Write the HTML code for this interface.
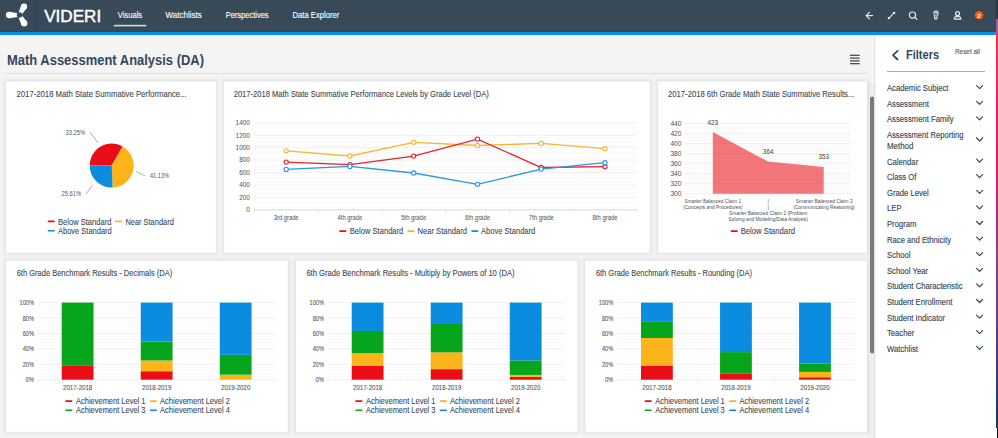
<!DOCTYPE html>
<html><head><meta charset="utf-8"><title>Videri - Math Assessment Analysis</title>
<style>
html,body{margin:0;padding:0;width:998px;height:438px;overflow:hidden;background:#f3f3f3}
svg{display:block;font-family:"Liberation Sans", sans-serif}
</style></head><body>
<svg width="998" height="438" viewBox="0 0 998 438">
<rect x="0" y="0" width="998" height="32" fill="#384a57"/>
<rect x="0" y="31" width="996" height="1" fill="#3e4448"/>
<rect x="0" y="32" width="996" height="3" fill="#0590ec"/>
<rect x="0" y="35" width="874" height="1" fill="#f8f5f3"/>
<rect x="35" y="0" width="1" height="31" fill="#2f3d47"/>
<path d="M19.52,13.50 L9.23,11.70 L9.17,18.30 L19.48,16.70 Z" fill="#fff"/>
<circle cx="9.2" cy="15.0" r="3.3" fill="#fff"/>
<path d="M20.92,15.84 L26.75,7.94 L21.25,5.06 L18.08,14.36 Z" fill="#fff"/>
<circle cx="24.0" cy="6.5" r="3.1" fill="#fff"/>
<path d="M18.11,15.90 L21.42,24.89 L26.98,21.71 L20.89,14.30 Z" fill="#fff"/>
<circle cx="24.2" cy="23.3" r="3.2" fill="#fff"/>
<circle cx="19.5" cy="15.1" r="2.75" fill="#384a57"/>
<text x="44.2" y="21.8" font-size="16.5" fill="#fff" font-weight="400" text-anchor="start" textLength="57" lengthAdjust="spacingAndGlyphs" stroke="#fff" stroke-width="0.45">VIDERI</text>
<text x="117.7" y="18.2" font-size="8.2" fill="#fff" font-weight="400" text-anchor="start" textLength="24.5" lengthAdjust="spacingAndGlyphs" stroke="#fff" stroke-width="0.12">Visuals</text>
<text x="165.6" y="18.2" font-size="8.2" fill="#fff" font-weight="400" text-anchor="start" textLength="36.1" lengthAdjust="spacingAndGlyphs" stroke="#fff" stroke-width="0.12">Watchlists</text>
<text x="225.7" y="18.2" font-size="8.2" fill="#fff" font-weight="400" text-anchor="start" textLength="42.9" lengthAdjust="spacingAndGlyphs" stroke="#fff" stroke-width="0.12">Perspectives</text>
<text x="292.5" y="18.2" font-size="8.2" fill="#fff" font-weight="400" text-anchor="start" textLength="46.8" lengthAdjust="spacingAndGlyphs" stroke="#fff" stroke-width="0.12">Data Explorer</text>
<rect x="113.8" y="24.8" width="32.4" height="1.6" fill="#d5dade"/>
<path d="M872.6,15.6 H866.2 M869.4,12.3 L866.1,15.6 L869.4,18.9" fill="none" stroke="#e8ecef" stroke-width="1.2" stroke-linecap="round" stroke-linejoin="round"/>
<path d="M889.2,17.8 L893.8,13.2" fill="none" stroke="#e8ecef" stroke-width="1.2" stroke-linecap="round" stroke-linejoin="round"/><circle cx="888.9" cy="18.1" r="1.2" fill="#e8ecef"/><circle cx="894.1" cy="12.9" r="1.2" fill="#e8ecef"/>
<circle cx="912.5" cy="15.1" r="3.1" fill="none" stroke="#e8ecef" stroke-width="1.2" stroke-linecap="round" stroke-linejoin="round"/><path d="M914.8,17.4 L916.8,19.3" fill="none" stroke="#e8ecef" stroke-width="1.2" stroke-linecap="round" stroke-linejoin="round"/>
<path d="M933.6,13.6 A2.3,2.3 0 1 1 937.9,14.5 L937,16.1 V18.6 Q935.8,19.9 934.6,18.6 V16.1 L933.9,14.6" fill="none" stroke="#e8ecef" stroke-width="1.1" stroke-linejoin="round"/>
<path d="M934.8,13.3 Q935.1,12.2 936,12.3 Q937,12.5 936.6,13.5 Q936.3,14.1 935.8,14.5 V15.2" fill="none" stroke="#e8ecef" stroke-width="0.9" stroke-linecap="round"/>
<circle cx="935.8" cy="17.3" r="0.6" fill="#e8ecef"/>
<circle cx="957.5" cy="13.6" r="2.0" fill="none" stroke="#e8ecef" stroke-width="1.2"/>
<path d="M954.3,19.2 Q953.9,16.4 957.5,16.4 Q961.1,16.4 960.7,19.2 Z" fill="none" stroke="#e8ecef" stroke-width="1.2" stroke-linejoin="round"/>
<circle cx="979.1" cy="15.3" r="5" fill="#2f3c45"/><circle cx="979.1" cy="15.3" r="4.3" fill="#fd5a17"/>
<text x="979.1" y="17.5" font-size="6.2" fill="#fff" font-weight="700" text-anchor="middle">2</text>
<defs><linearGradient id="edge" x1="0" y1="0" x2="0" y2="1"><stop offset="0" stop-color="#f23c52"/><stop offset="0.215" stop-color="#f2185a"/><stop offset="0.416" stop-color="#d01a78"/><stop offset="0.59" stop-color="#8c3c90"/><stop offset="0.79" stop-color="#5a3890"/><stop offset="0.93" stop-color="#203a78"/><stop offset="1" stop-color="#1a3068"/></linearGradient></defs>
<rect x="996" y="0" width="2" height="19" fill="#2a3640"/>
<rect x="996" y="19" width="2" height="10" fill="#9a5aa2"/>
<rect x="996" y="29" width="2" height="399" fill="url(#edge)"/>
<rect x="996" y="428" width="2" height="10" fill="#ffffff"/>
<rect x="997" y="428" width="1" height="10" fill="#111111"/>
<rect x="0" y="36" width="874" height="402" fill="#f4f4f4"/>
<text x="7" y="64.7" font-size="14.5" fill="#34485a" font-weight="700" text-anchor="start" textLength="197" lengthAdjust="spacingAndGlyphs">Math Assessment Analysis (DA)</text>
<rect x="850" y="54.699999999999996" width="9.6" height="1.2" fill="#3a4046"/>
<rect x="850" y="57.5" width="9.6" height="1.2" fill="#3a4046"/>
<rect x="850" y="60.3" width="9.6" height="1.2" fill="#3a4046"/>
<rect x="850" y="63.1" width="9.6" height="1.2" fill="#3a4046"/>
<rect x="6" y="73" width="862" height="1" fill="#dedee2"/>
<rect x="867" y="82" width="7" height="356" fill="#efefef"/>
<rect x="870" y="96.5" width="4.4" height="257" rx="2.2" fill="#7a7a7a"/>
<rect x="874" y="35" width="1.5" height="403" fill="#e4e4e6"/>
<rect x="875.5" y="35" width="120.5" height="403" fill="#ffffff"/>
<path d="M897.6,50.9 L893,55.2 L897.6,59.5" fill="none" stroke="#34485a" stroke-width="1.8" stroke-linecap="round" stroke-linejoin="round"/>
<text x="906" y="58.6" font-size="12.3" fill="#34485a" font-weight="700" text-anchor="start" textLength="33.1" lengthAdjust="spacingAndGlyphs">Filters</text>
<text x="954.9" y="53.8" font-size="7" fill="#4a5561" font-weight="400" text-anchor="start" textLength="25.1" lengthAdjust="spacingAndGlyphs" stroke="#4a5561" stroke-width="0.1">Reset all</text>
<rect x="887" y="71" width="98" height="1" fill="#a7aeb4"/>
<text x="887" y="91.2" font-size="8.3" fill="#394959" font-weight="400" text-anchor="start" textLength="61.5" lengthAdjust="spacingAndGlyphs" stroke="#394959" stroke-width="0.15">Academic Subject</text>
<path d="M976.6,85.7 L979.6,88.7 L982.6,85.7" fill="none" stroke="#394959" stroke-width="1.2" stroke-linecap="round" stroke-linejoin="round"/>
<text x="887" y="106.8" font-size="8.3" fill="#394959" font-weight="400" text-anchor="start" textLength="41.8" lengthAdjust="spacingAndGlyphs" stroke="#394959" stroke-width="0.15">Assessment</text>
<path d="M976.6,101.3 L979.6,104.3 L982.6,101.3" fill="none" stroke="#394959" stroke-width="1.2" stroke-linecap="round" stroke-linejoin="round"/>
<text x="887" y="122.4" font-size="8.3" fill="#394959" font-weight="400" text-anchor="start" textLength="66.6" lengthAdjust="spacingAndGlyphs" stroke="#394959" stroke-width="0.15">Assessment Family</text>
<path d="M976.6,116.9 L979.6,119.9 L982.6,116.9" fill="none" stroke="#394959" stroke-width="1.2" stroke-linecap="round" stroke-linejoin="round"/>
<text x="887" y="138.0" font-size="8.3" fill="#394959" font-weight="400" text-anchor="start" textLength="76.5" lengthAdjust="spacingAndGlyphs" stroke="#394959" stroke-width="0.15">Assessment Reporting</text>
<text x="887" y="149.1" font-size="8.3" fill="#394959" font-weight="400" text-anchor="start" textLength="26.4" lengthAdjust="spacingAndGlyphs" stroke="#394959" stroke-width="0.15">Method</text>
<path d="M976.6,138.0 L979.6,141.0 L982.6,138.0" fill="none" stroke="#394959" stroke-width="1.2" stroke-linecap="round" stroke-linejoin="round"/>
<text x="887" y="164.6" font-size="8.3" fill="#394959" font-weight="400" text-anchor="start" textLength="31.2" lengthAdjust="spacingAndGlyphs" stroke="#394959" stroke-width="0.15">Calendar</text>
<path d="M976.6,159.1 L979.6,162.1 L982.6,159.1" fill="none" stroke="#394959" stroke-width="1.2" stroke-linecap="round" stroke-linejoin="round"/>
<text x="887" y="180.2" font-size="8.3" fill="#394959" font-weight="400" text-anchor="start" textLength="29.4" lengthAdjust="spacingAndGlyphs" stroke="#394959" stroke-width="0.15">Class Of</text>
<path d="M976.6,174.7 L979.6,177.7 L982.6,174.7" fill="none" stroke="#394959" stroke-width="1.2" stroke-linecap="round" stroke-linejoin="round"/>
<text x="887" y="195.8" font-size="8.3" fill="#394959" font-weight="400" text-anchor="start" textLength="41.8" lengthAdjust="spacingAndGlyphs" stroke="#394959" stroke-width="0.15">Grade Level</text>
<path d="M976.6,190.3 L979.6,193.3 L982.6,190.3" fill="none" stroke="#394959" stroke-width="1.2" stroke-linecap="round" stroke-linejoin="round"/>
<text x="887" y="211.4" font-size="8.3" fill="#394959" font-weight="400" text-anchor="start" textLength="14.5" lengthAdjust="spacingAndGlyphs" stroke="#394959" stroke-width="0.15">LEP</text>
<path d="M976.6,205.9 L979.6,208.9 L982.6,205.9" fill="none" stroke="#394959" stroke-width="1.2" stroke-linecap="round" stroke-linejoin="round"/>
<text x="887" y="227.0" font-size="8.3" fill="#394959" font-weight="400" text-anchor="start" textLength="29.4" lengthAdjust="spacingAndGlyphs" stroke="#394959" stroke-width="0.15">Program</text>
<path d="M976.6,221.5 L979.6,224.5 L982.6,221.5" fill="none" stroke="#394959" stroke-width="1.2" stroke-linecap="round" stroke-linejoin="round"/>
<text x="887" y="242.60000000000002" font-size="8.3" fill="#394959" font-weight="400" text-anchor="start" textLength="64.0" lengthAdjust="spacingAndGlyphs" stroke="#394959" stroke-width="0.15">Race and Ethnicity</text>
<path d="M976.6,237.1 L979.6,240.1 L982.6,237.1" fill="none" stroke="#394959" stroke-width="1.2" stroke-linecap="round" stroke-linejoin="round"/>
<text x="887" y="258.2" font-size="8.3" fill="#394959" font-weight="400" text-anchor="start" textLength="23.5" lengthAdjust="spacingAndGlyphs" stroke="#394959" stroke-width="0.15">School</text>
<path d="M976.6,252.7 L979.6,255.7 L982.6,252.7" fill="none" stroke="#394959" stroke-width="1.2" stroke-linecap="round" stroke-linejoin="round"/>
<text x="887" y="273.8" font-size="8.3" fill="#394959" font-weight="400" text-anchor="start" textLength="41.0" lengthAdjust="spacingAndGlyphs" stroke="#394959" stroke-width="0.15">School Year</text>
<path d="M976.6,268.3 L979.6,271.3 L982.6,268.3" fill="none" stroke="#394959" stroke-width="1.2" stroke-linecap="round" stroke-linejoin="round"/>
<text x="887" y="289.4" font-size="8.3" fill="#394959" font-weight="400" text-anchor="start" textLength="75.6" lengthAdjust="spacingAndGlyphs" stroke="#394959" stroke-width="0.15">Student Characteristic</text>
<path d="M976.6,283.9 L979.6,286.9 L982.6,283.9" fill="none" stroke="#394959" stroke-width="1.2" stroke-linecap="round" stroke-linejoin="round"/>
<text x="887" y="305.0" font-size="8.3" fill="#394959" font-weight="400" text-anchor="start" textLength="65.3" lengthAdjust="spacingAndGlyphs" stroke="#394959" stroke-width="0.15">Student Enrollment</text>
<path d="M976.6,299.5 L979.6,302.5 L982.6,299.5" fill="none" stroke="#394959" stroke-width="1.2" stroke-linecap="round" stroke-linejoin="round"/>
<text x="887" y="320.6" font-size="8.3" fill="#394959" font-weight="400" text-anchor="start" textLength="58.1" lengthAdjust="spacingAndGlyphs" stroke="#394959" stroke-width="0.15">Student Indicator</text>
<path d="M976.6,315.1 L979.6,318.1 L982.6,315.1" fill="none" stroke="#394959" stroke-width="1.2" stroke-linecap="round" stroke-linejoin="round"/>
<text x="887" y="336.2" font-size="8.3" fill="#394959" font-weight="400" text-anchor="start" textLength="27.3" lengthAdjust="spacingAndGlyphs" stroke="#394959" stroke-width="0.15">Teacher</text>
<path d="M976.6,330.7 L979.6,333.7 L982.6,330.7" fill="none" stroke="#394959" stroke-width="1.2" stroke-linecap="round" stroke-linejoin="round"/>
<text x="887" y="351.8" font-size="8.3" fill="#394959" font-weight="400" text-anchor="start" textLength="30.9" lengthAdjust="spacingAndGlyphs" stroke="#394959" stroke-width="0.15">Watchlist</text>
<path d="M976.6,346.3 L979.6,349.3 L982.6,346.3" fill="none" stroke="#394959" stroke-width="1.2" stroke-linecap="round" stroke-linejoin="round"/>
<rect x="2" y="77.6" width="217.8" height="179.2" rx="4" fill="rgba(30,30,70,0.01)"/>
<rect x="3" y="78.6" width="215.8" height="177.2" rx="3" fill="rgba(30,30,70,0.01)"/>
<rect x="4" y="79.6" width="213.8" height="175.2" rx="2" fill="rgba(30,30,70,0.013)"/>
<rect x="5" y="80.6" width="211.8" height="173.2" rx="1" fill="rgba(30,30,70,0.02)"/>
<rect x="6" y="81.6" width="209.8" height="171.2" fill="#ffffff"/>
<rect x="220.2" y="77.6" width="433.7" height="179.2" rx="4" fill="rgba(30,30,70,0.01)"/>
<rect x="221.2" y="78.6" width="431.7" height="177.2" rx="3" fill="rgba(30,30,70,0.01)"/>
<rect x="222.2" y="79.6" width="429.7" height="175.2" rx="2" fill="rgba(30,30,70,0.013)"/>
<rect x="223.2" y="80.6" width="427.7" height="173.2" rx="1" fill="rgba(30,30,70,0.02)"/>
<rect x="224.2" y="81.6" width="425.7" height="171.2" fill="#ffffff"/>
<rect x="654.2" y="77.6" width="216.8" height="179.2" rx="4" fill="rgba(30,30,70,0.01)"/>
<rect x="655.2" y="78.6" width="214.8" height="177.2" rx="3" fill="rgba(30,30,70,0.01)"/>
<rect x="656.2" y="79.6" width="212.8" height="175.2" rx="2" fill="rgba(30,30,70,0.013)"/>
<rect x="657.2" y="80.6" width="210.8" height="173.2" rx="1" fill="rgba(30,30,70,0.02)"/>
<rect x="658.2" y="81.6" width="208.8" height="171.2" fill="#ffffff"/>
<rect x="2" y="256.6" width="289.7" height="179.2" rx="4" fill="rgba(30,30,70,0.01)"/>
<rect x="3" y="257.6" width="287.7" height="177.2" rx="3" fill="rgba(30,30,70,0.01)"/>
<rect x="4" y="258.6" width="285.7" height="175.2" rx="2" fill="rgba(30,30,70,0.013)"/>
<rect x="5" y="259.6" width="283.7" height="173.2" rx="1" fill="rgba(30,30,70,0.02)"/>
<rect x="6" y="260.6" width="281.7" height="171.2" fill="#ffffff"/>
<rect x="292" y="256.6" width="289.4" height="179.2" rx="4" fill="rgba(30,30,70,0.01)"/>
<rect x="293" y="257.6" width="287.4" height="177.2" rx="3" fill="rgba(30,30,70,0.01)"/>
<rect x="294" y="258.6" width="285.4" height="175.2" rx="2" fill="rgba(30,30,70,0.013)"/>
<rect x="295" y="259.6" width="283.4" height="173.2" rx="1" fill="rgba(30,30,70,0.02)"/>
<rect x="296" y="260.6" width="281.4" height="171.2" fill="#ffffff"/>
<rect x="581.3" y="256.6" width="289.7" height="179.2" rx="4" fill="rgba(30,30,70,0.01)"/>
<rect x="582.3" y="257.6" width="287.7" height="177.2" rx="3" fill="rgba(30,30,70,0.01)"/>
<rect x="583.3" y="258.6" width="285.7" height="175.2" rx="2" fill="rgba(30,30,70,0.013)"/>
<rect x="584.3" y="259.6" width="283.7" height="173.2" rx="1" fill="rgba(30,30,70,0.02)"/>
<rect x="585.3" y="260.6" width="281.7" height="171.2" fill="#ffffff"/>
<text x="16.5" y="97.2" font-size="8.8" fill="#3b4957" font-weight="400" text-anchor="start" textLength="170.1" lengthAdjust="spacingAndGlyphs" stroke="#3b4957" stroke-width="0.1">2017-2018 Math State Summative Performance...</text>
<text x="233.7" y="97.2" font-size="8.8" fill="#3b4957" font-weight="400" text-anchor="start" textLength="255.2" lengthAdjust="spacingAndGlyphs" stroke="#3b4957" stroke-width="0.1">2017-2018 Math State Summative Performance Levels by Grade Level (DA)</text>
<text x="668.1" y="97.2" font-size="8.8" fill="#3b4957" font-weight="400" text-anchor="start" textLength="186.1" lengthAdjust="spacingAndGlyphs" stroke="#3b4957" stroke-width="0.1">2017-2018 6th Grade Math State Summative Results...</text>
<text x="16.7" y="276.2" font-size="8.8" fill="#3b4957" font-weight="400" text-anchor="start" textLength="155.5" lengthAdjust="spacingAndGlyphs" stroke="#3b4957" stroke-width="0.1">6th Grade Benchmark Results - Decimals (DA)</text>
<text x="306.4" y="276.2" font-size="8.8" fill="#3b4957" font-weight="400" text-anchor="start" textLength="208.1" lengthAdjust="spacingAndGlyphs" stroke="#3b4957" stroke-width="0.1">6th Grade Benchmark Results - Multiply by Powers of 10 (DA)</text>
<text x="595.9" y="276.2" font-size="8.8" fill="#3b4957" font-weight="400" text-anchor="start" textLength="156" lengthAdjust="spacingAndGlyphs" stroke="#3b4957" stroke-width="0.1">6th Grade Benchmark Results - Rounding (DA)</text>
<path d="M111.7,165.6 L89.70,165.60 A22,22 0 0 1 122.60,146.49 Z" fill="#ea0d17"/>
<path d="M111.7,165.6 L122.60,146.49 A22,22 0 0 1 112.56,187.58 Z" fill="#fbb51b"/>
<path d="M111.7,165.6 L112.56,187.58 A22,22 0 0 1 89.70,165.61 Z" fill="#0a8ce0"/>
<path d="M89.8,132 L98.1,142.9 M136.3,171.4 L145,175.9 M93,184.6 L85.9,194.3" stroke="#9a9a9a" stroke-width="0.8" fill="none"/>
<text x="65.5" y="134.8" font-size="6.4" fill="#4f5861" font-weight="400" text-anchor="start" textLength="19.6" lengthAdjust="spacingAndGlyphs">33.25%</text>
<text x="150" y="178.1" font-size="6.4" fill="#4f5861" font-weight="400" text-anchor="start" textLength="19.0" lengthAdjust="spacingAndGlyphs">41.13%</text>
<text x="61.6" y="196.3" font-size="6.4" fill="#4f5861" font-weight="400" text-anchor="start" textLength="19.4" lengthAdjust="spacingAndGlyphs">25.61%</text>
<rect x="47.6" y="220.6" width="7.3" height="1.7" rx="0.8" fill="#ea0d17"/>
<text x="58" y="224.8" font-size="8.5" fill="#3e4b59" font-weight="400" text-anchor="start" textLength="53.4" lengthAdjust="spacingAndGlyphs" stroke="#3e4b59" stroke-width="0.1">Below Standard</text>
<rect x="114.9" y="220.6" width="7.3" height="1.7" rx="0.8" fill="#fbb51b"/>
<text x="125.4" y="224.8" font-size="8.5" fill="#3e4b59" font-weight="400" text-anchor="start" textLength="48.4" lengthAdjust="spacingAndGlyphs" stroke="#3e4b59" stroke-width="0.1">Near Standard</text>
<rect x="47.6" y="229.89999999999998" width="7.3" height="1.7" rx="0.8" fill="#0a8ce0"/>
<text x="58" y="234.1" font-size="8.5" fill="#3e4b59" font-weight="400" text-anchor="start" textLength="53.8" lengthAdjust="spacingAndGlyphs" stroke="#3e4b59" stroke-width="0.1">Above Standard</text>
<rect x="254.3" y="209.3" width="382.59999999999997" height="1" fill="#efefef"/>
<rect x="254.3" y="206.81" width="382.59999999999997" height="0.8" fill="#f9f9f9"/>
<rect x="254.3" y="204.33" width="382.59999999999997" height="0.8" fill="#f9f9f9"/>
<rect x="254.3" y="201.84" width="382.59999999999997" height="0.8" fill="#f9f9f9"/>
<rect x="254.3" y="199.36" width="382.59999999999997" height="0.8" fill="#f9f9f9"/>
<rect x="254.3" y="196.87" width="382.59999999999997" height="1" fill="#efefef"/>
<rect x="254.3" y="194.39" width="382.59999999999997" height="0.8" fill="#f9f9f9"/>
<rect x="254.3" y="191.9" width="382.59999999999997" height="0.8" fill="#f9f9f9"/>
<rect x="254.3" y="189.41" width="382.59999999999997" height="0.8" fill="#f9f9f9"/>
<rect x="254.3" y="186.93" width="382.59999999999997" height="0.8" fill="#f9f9f9"/>
<rect x="254.3" y="184.44" width="382.59999999999997" height="1" fill="#efefef"/>
<rect x="254.3" y="181.96" width="382.59999999999997" height="0.8" fill="#f9f9f9"/>
<rect x="254.3" y="179.47" width="382.59999999999997" height="0.8" fill="#f9f9f9"/>
<rect x="254.3" y="176.99" width="382.59999999999997" height="0.8" fill="#f9f9f9"/>
<rect x="254.3" y="174.5" width="382.59999999999997" height="0.8" fill="#f9f9f9"/>
<rect x="254.3" y="172.01" width="382.59999999999997" height="1" fill="#efefef"/>
<rect x="254.3" y="169.53" width="382.59999999999997" height="0.8" fill="#f9f9f9"/>
<rect x="254.3" y="167.04" width="382.59999999999997" height="0.8" fill="#f9f9f9"/>
<rect x="254.3" y="164.56" width="382.59999999999997" height="0.8" fill="#f9f9f9"/>
<rect x="254.3" y="162.07" width="382.59999999999997" height="0.8" fill="#f9f9f9"/>
<rect x="254.3" y="159.59" width="382.59999999999997" height="1" fill="#efefef"/>
<rect x="254.3" y="157.1" width="382.59999999999997" height="0.8" fill="#f9f9f9"/>
<rect x="254.3" y="154.61" width="382.59999999999997" height="0.8" fill="#f9f9f9"/>
<rect x="254.3" y="152.13" width="382.59999999999997" height="0.8" fill="#f9f9f9"/>
<rect x="254.3" y="149.64" width="382.59999999999997" height="0.8" fill="#f9f9f9"/>
<rect x="254.3" y="147.16" width="382.59999999999997" height="1" fill="#efefef"/>
<rect x="254.3" y="144.67" width="382.59999999999997" height="0.8" fill="#f9f9f9"/>
<rect x="254.3" y="142.19" width="382.59999999999997" height="0.8" fill="#f9f9f9"/>
<rect x="254.3" y="139.7" width="382.59999999999997" height="0.8" fill="#f9f9f9"/>
<rect x="254.3" y="137.21" width="382.59999999999997" height="0.8" fill="#f9f9f9"/>
<rect x="254.3" y="134.73" width="382.59999999999997" height="1" fill="#efefef"/>
<rect x="254.3" y="132.24" width="382.59999999999997" height="0.8" fill="#f9f9f9"/>
<rect x="254.3" y="129.76" width="382.59999999999997" height="0.8" fill="#f9f9f9"/>
<rect x="254.3" y="127.27" width="382.59999999999997" height="0.8" fill="#f9f9f9"/>
<rect x="254.3" y="124.79" width="382.59999999999997" height="0.8" fill="#f9f9f9"/>
<rect x="254.3" y="122.3" width="382.59999999999997" height="1" fill="#efefef"/>
<text x="249.8" y="212.10000000000002" font-size="6.4" fill="#515a63" font-weight="400" text-anchor="end" stroke="#515a63" stroke-width="0.05">0</text>
<text x="249.8" y="199.6714285714286" font-size="6.4" fill="#515a63" font-weight="400" text-anchor="end" stroke="#515a63" stroke-width="0.05">200</text>
<text x="249.8" y="187.24285714285716" font-size="6.4" fill="#515a63" font-weight="400" text-anchor="end" stroke="#515a63" stroke-width="0.05">400</text>
<text x="249.8" y="174.81428571428575" font-size="6.4" fill="#515a63" font-weight="400" text-anchor="end" stroke="#515a63" stroke-width="0.05">600</text>
<text x="249.8" y="162.3857142857143" font-size="6.4" fill="#515a63" font-weight="400" text-anchor="end" stroke="#515a63" stroke-width="0.05">800</text>
<text x="249.8" y="149.95714285714288" font-size="6.4" fill="#515a63" font-weight="400" text-anchor="end" stroke="#515a63" stroke-width="0.05">1000</text>
<text x="249.8" y="137.52857142857147" font-size="6.4" fill="#515a63" font-weight="400" text-anchor="end" stroke="#515a63" stroke-width="0.05">1200</text>
<text x="249.8" y="125.10000000000001" font-size="6.4" fill="#515a63" font-weight="400" text-anchor="end" stroke="#515a63" stroke-width="0.05">1400</text>
<rect x="254.3" y="209.3" width="382.59999999999997" height="1" fill="#dedede"/>
<rect x="253.8" y="210" width="1" height="2.5" fill="#dedede"/>
<rect x="317.56666666666666" y="210" width="1" height="2.5" fill="#dedede"/>
<rect x="381.3333333333333" y="210" width="1" height="2.5" fill="#dedede"/>
<rect x="445.1" y="210" width="1" height="2.5" fill="#dedede"/>
<rect x="508.8666666666667" y="210" width="1" height="2.5" fill="#dedede"/>
<rect x="572.6333333333333" y="210" width="1" height="2.5" fill="#dedede"/>
<rect x="636.4" y="210" width="1" height="2.5" fill="#dedede"/>
<text x="286.18333333333334" y="219.8" font-size="6.3" fill="#515a63" font-weight="400" text-anchor="middle" textLength="24.9" lengthAdjust="spacingAndGlyphs" stroke="#515a63" stroke-width="0.05">3rd grade</text>
<text x="349.95" y="219.8" font-size="6.3" fill="#515a63" font-weight="400" text-anchor="middle" textLength="24.9" lengthAdjust="spacingAndGlyphs" stroke="#515a63" stroke-width="0.05">4th grade</text>
<text x="413.7166666666667" y="219.8" font-size="6.3" fill="#515a63" font-weight="400" text-anchor="middle" textLength="24.9" lengthAdjust="spacingAndGlyphs" stroke="#515a63" stroke-width="0.05">5th grade</text>
<text x="477.48333333333335" y="219.8" font-size="6.3" fill="#515a63" font-weight="400" text-anchor="middle" textLength="24.9" lengthAdjust="spacingAndGlyphs" stroke="#515a63" stroke-width="0.05">6th grade</text>
<text x="541.25" y="219.8" font-size="6.3" fill="#515a63" font-weight="400" text-anchor="middle" textLength="24.9" lengthAdjust="spacingAndGlyphs" stroke="#515a63" stroke-width="0.05">7th grade</text>
<text x="605.0166666666667" y="219.8" font-size="6.3" fill="#515a63" font-weight="400" text-anchor="middle" textLength="24.9" lengthAdjust="spacingAndGlyphs" stroke="#515a63" stroke-width="0.05">8th grade</text>
<path d="M286.2,150.8 L349.9,156.0 L413.7,142.3 L477.5,145.5 L541.2,143.4 L605.0,148.7" fill="none" stroke="#f9b62e" stroke-width="1.3"/>
<path d="M286.2,162.1 L349.9,164.6 L413.7,156.1 L477.5,139.1 L541.2,167.5 L605.0,166.7" fill="none" stroke="#e8202e" stroke-width="1.3"/>
<path d="M286.2,169.4 L349.9,166.4 L413.7,173.0 L477.5,184.3 L541.2,169.1 L605.0,162.7" fill="none" stroke="#2a98e4" stroke-width="1.3"/>
<circle cx="286.2" cy="150.8" r="2.1" fill="#fff" stroke="#f9b62e" stroke-width="1.1"/>
<circle cx="349.9" cy="156.0" r="2.1" fill="#fff" stroke="#f9b62e" stroke-width="1.1"/>
<circle cx="413.7" cy="142.3" r="2.1" fill="#fff" stroke="#f9b62e" stroke-width="1.1"/>
<circle cx="477.5" cy="145.5" r="2.1" fill="#fff" stroke="#f9b62e" stroke-width="1.1"/>
<circle cx="541.2" cy="143.4" r="2.1" fill="#fff" stroke="#f9b62e" stroke-width="1.1"/>
<circle cx="605.0" cy="148.7" r="2.1" fill="#fff" stroke="#f9b62e" stroke-width="1.1"/>
<circle cx="286.2" cy="162.1" r="2.1" fill="#fff" stroke="#e8202e" stroke-width="1.1"/>
<circle cx="349.9" cy="164.6" r="2.1" fill="#fff" stroke="#e8202e" stroke-width="1.1"/>
<circle cx="413.7" cy="156.1" r="2.1" fill="#fff" stroke="#e8202e" stroke-width="1.1"/>
<circle cx="477.5" cy="139.1" r="2.1" fill="#fff" stroke="#e8202e" stroke-width="1.1"/>
<circle cx="541.2" cy="167.5" r="2.1" fill="#fff" stroke="#e8202e" stroke-width="1.1"/>
<circle cx="605.0" cy="166.7" r="2.1" fill="#fff" stroke="#e8202e" stroke-width="1.1"/>
<circle cx="286.2" cy="169.4" r="2.1" fill="#fff" stroke="#2a98e4" stroke-width="1.1"/>
<circle cx="349.9" cy="166.4" r="2.1" fill="#fff" stroke="#2a98e4" stroke-width="1.1"/>
<circle cx="413.7" cy="173.0" r="2.1" fill="#fff" stroke="#2a98e4" stroke-width="1.1"/>
<circle cx="477.5" cy="184.3" r="2.1" fill="#fff" stroke="#2a98e4" stroke-width="1.1"/>
<circle cx="541.2" cy="169.1" r="2.1" fill="#fff" stroke="#2a98e4" stroke-width="1.1"/>
<circle cx="605.0" cy="162.7" r="2.1" fill="#fff" stroke="#2a98e4" stroke-width="1.1"/>
<rect x="339.2" y="230.2" width="7.3" height="1.7" rx="0.8" fill="#ea0d17"/>
<text x="349.8" y="233.9" font-size="8.5" fill="#3e4b59" font-weight="400" text-anchor="start" textLength="53.5" lengthAdjust="spacingAndGlyphs" stroke="#3e4b59" stroke-width="0.1">Below Standard</text>
<rect x="407.3" y="230.2" width="7.3" height="1.7" rx="0.8" fill="#fbb51b"/>
<text x="417.5" y="233.9" font-size="8.5" fill="#3e4b59" font-weight="400" text-anchor="start" textLength="49.4" lengthAdjust="spacingAndGlyphs" stroke="#3e4b59" stroke-width="0.1">Near Standard</text>
<rect x="471.2" y="230.2" width="7.3" height="1.7" rx="0.8" fill="#0a8ce0"/>
<text x="481" y="233.9" font-size="8.5" fill="#3e4b59" font-weight="400" text-anchor="start" textLength="54.3" lengthAdjust="spacingAndGlyphs" stroke="#3e4b59" stroke-width="0.1">Above Standard</text>
<rect x="685.2" y="193.2" width="166.19999999999993" height="1" fill="#efefef"/>
<rect x="685.2" y="191.19" width="166.19999999999993" height="0.8" fill="#f9f9f9"/>
<rect x="685.2" y="189.18" width="166.19999999999993" height="0.8" fill="#f9f9f9"/>
<rect x="685.2" y="187.17" width="166.19999999999993" height="0.8" fill="#f9f9f9"/>
<rect x="685.2" y="185.17" width="166.19999999999993" height="0.8" fill="#f9f9f9"/>
<rect x="685.2" y="183.16" width="166.19999999999993" height="1" fill="#efefef"/>
<rect x="685.2" y="181.15" width="166.19999999999993" height="0.8" fill="#f9f9f9"/>
<rect x="685.2" y="179.14" width="166.19999999999993" height="0.8" fill="#f9f9f9"/>
<rect x="685.2" y="177.13" width="166.19999999999993" height="0.8" fill="#f9f9f9"/>
<rect x="685.2" y="175.12" width="166.19999999999993" height="0.8" fill="#f9f9f9"/>
<rect x="685.2" y="173.11" width="166.19999999999993" height="1" fill="#efefef"/>
<rect x="685.2" y="171.11" width="166.19999999999993" height="0.8" fill="#f9f9f9"/>
<rect x="685.2" y="169.1" width="166.19999999999993" height="0.8" fill="#f9f9f9"/>
<rect x="685.2" y="167.09" width="166.19999999999993" height="0.8" fill="#f9f9f9"/>
<rect x="685.2" y="165.08" width="166.19999999999993" height="0.8" fill="#f9f9f9"/>
<rect x="685.2" y="163.07" width="166.19999999999993" height="1" fill="#efefef"/>
<rect x="685.2" y="161.06" width="166.19999999999993" height="0.8" fill="#f9f9f9"/>
<rect x="685.2" y="159.05" width="166.19999999999993" height="0.8" fill="#f9f9f9"/>
<rect x="685.2" y="157.05" width="166.19999999999993" height="0.8" fill="#f9f9f9"/>
<rect x="685.2" y="155.04" width="166.19999999999993" height="0.8" fill="#f9f9f9"/>
<rect x="685.2" y="153.03" width="166.19999999999993" height="1" fill="#efefef"/>
<rect x="685.2" y="151.02" width="166.19999999999993" height="0.8" fill="#f9f9f9"/>
<rect x="685.2" y="149.01" width="166.19999999999993" height="0.8" fill="#f9f9f9"/>
<rect x="685.2" y="147.0" width="166.19999999999993" height="0.8" fill="#f9f9f9"/>
<rect x="685.2" y="144.99" width="166.19999999999993" height="0.8" fill="#f9f9f9"/>
<rect x="685.2" y="142.99" width="166.19999999999993" height="1" fill="#efefef"/>
<rect x="685.2" y="140.98" width="166.19999999999993" height="0.8" fill="#f9f9f9"/>
<rect x="685.2" y="138.97" width="166.19999999999993" height="0.8" fill="#f9f9f9"/>
<rect x="685.2" y="136.96" width="166.19999999999993" height="0.8" fill="#f9f9f9"/>
<rect x="685.2" y="134.95" width="166.19999999999993" height="0.8" fill="#f9f9f9"/>
<rect x="685.2" y="132.94" width="166.19999999999993" height="1" fill="#efefef"/>
<rect x="685.2" y="130.93" width="166.19999999999993" height="0.8" fill="#f9f9f9"/>
<rect x="685.2" y="128.93" width="166.19999999999993" height="0.8" fill="#f9f9f9"/>
<rect x="685.2" y="126.92" width="166.19999999999993" height="0.8" fill="#f9f9f9"/>
<rect x="685.2" y="124.91" width="166.19999999999993" height="0.8" fill="#f9f9f9"/>
<rect x="685.2" y="122.9" width="166.19999999999993" height="1" fill="#efefef"/>
<text x="681.4" y="196.1" font-size="6.6" fill="#4a4f55" font-weight="400" text-anchor="end">300</text>
<text x="681.4" y="186.05714285714285" font-size="6.6" fill="#4a4f55" font-weight="400" text-anchor="end">320</text>
<text x="681.4" y="176.0142857142857" font-size="6.6" fill="#4a4f55" font-weight="400" text-anchor="end">340</text>
<text x="681.4" y="165.97142857142856" font-size="6.6" fill="#4a4f55" font-weight="400" text-anchor="end">360</text>
<text x="681.4" y="155.92857142857142" font-size="6.6" fill="#4a4f55" font-weight="400" text-anchor="end">380</text>
<text x="681.4" y="145.8857142857143" font-size="6.6" fill="#4a4f55" font-weight="400" text-anchor="end">400</text>
<text x="681.4" y="135.84285714285716" font-size="6.6" fill="#4a4f55" font-weight="400" text-anchor="end">420</text>
<text x="681.4" y="125.80000000000001" font-size="6.6" fill="#4a4f55" font-weight="400" text-anchor="end">440</text>
<path d="M712.8,193.7 L712.8,131.9 L768.1,161.6 L823.7,167.1 L823.7,193.7 Z" fill="#ec1c24" fill-opacity="0.6"/>
<text x="712.8" y="124.8" font-size="6.4" fill="#444" font-weight="400" text-anchor="middle">423</text>
<text x="768.2" y="154.4" font-size="6.4" fill="#444" font-weight="400" text-anchor="middle">364</text>
<text x="823.8" y="159.2" font-size="6.4" fill="#444" font-weight="400" text-anchor="middle">353</text>
<text x="712.8" y="202.5" font-size="5.2" fill="#4a4f55" font-weight="400" text-anchor="middle" textLength="56.8" lengthAdjust="spacingAndGlyphs">Smarter Balanced Claim 1</text>
<text x="712.8" y="208.9" font-size="5.2" fill="#4a4f55" font-weight="400" text-anchor="middle" textLength="59.5" lengthAdjust="spacingAndGlyphs">(Concepts and Procedures)</text>
<text x="768.2" y="202.5" font-size="5.2" fill="#4a4f55" font-weight="400" text-anchor="middle">|</text>
<text x="768.2" y="208.6" font-size="5.2" fill="#4a4f55" font-weight="400" text-anchor="middle">|</text>
<text x="768.2" y="214.5" font-size="5.2" fill="#4a4f55" font-weight="400" text-anchor="middle" textLength="78.2" lengthAdjust="spacingAndGlyphs">Smarter Balanced Claim 2 (Problem</text>
<text x="768.2" y="220.6" font-size="5.2" fill="#4a4f55" font-weight="400" text-anchor="middle" textLength="79.2" lengthAdjust="spacingAndGlyphs">Solving and Modeling/Data Analysis)</text>
<text x="824.3" y="202.5" font-size="5.2" fill="#4a4f55" font-weight="400" text-anchor="middle" textLength="56.9" lengthAdjust="spacingAndGlyphs">Smarter Balanced Claim 3</text>
<text x="824.0" y="208.9" font-size="5.2" fill="#4a4f55" font-weight="400" text-anchor="middle" textLength="61.5" lengthAdjust="spacingAndGlyphs">(Communicating Reasoning)</text>
<rect x="730.6" y="230.2" width="7.3" height="1.7" rx="0.8" fill="#ea0d17"/>
<text x="740.7" y="233.9" font-size="8.5" fill="#3e4b59" font-weight="400" text-anchor="start" textLength="54.3" lengthAdjust="spacingAndGlyphs" stroke="#3e4b59" stroke-width="0.1">Below Standard</text>
<rect x="38.1" y="379.2" width="237.1" height="1" fill="#efefef"/>
<rect x="38.1" y="376.12" width="237.1" height="0.8" fill="#f9f9f9"/>
<rect x="38.1" y="373.03" width="237.1" height="0.8" fill="#f9f9f9"/>
<rect x="38.1" y="369.95" width="237.1" height="0.8" fill="#f9f9f9"/>
<rect x="38.1" y="366.86" width="237.1" height="0.8" fill="#f9f9f9"/>
<rect x="38.1" y="363.78" width="237.1" height="1" fill="#efefef"/>
<rect x="38.1" y="360.7" width="237.1" height="0.8" fill="#f9f9f9"/>
<rect x="38.1" y="357.61" width="237.1" height="0.8" fill="#f9f9f9"/>
<rect x="38.1" y="354.53" width="237.1" height="0.8" fill="#f9f9f9"/>
<rect x="38.1" y="351.44" width="237.1" height="0.8" fill="#f9f9f9"/>
<rect x="38.1" y="348.36" width="237.1" height="1" fill="#efefef"/>
<rect x="38.1" y="345.28" width="237.1" height="0.8" fill="#f9f9f9"/>
<rect x="38.1" y="342.19" width="237.1" height="0.8" fill="#f9f9f9"/>
<rect x="38.1" y="339.11" width="237.1" height="0.8" fill="#f9f9f9"/>
<rect x="38.1" y="336.02" width="237.1" height="0.8" fill="#f9f9f9"/>
<rect x="38.1" y="332.94" width="237.1" height="1" fill="#efefef"/>
<rect x="38.1" y="329.86" width="237.1" height="0.8" fill="#f9f9f9"/>
<rect x="38.1" y="326.77" width="237.1" height="0.8" fill="#f9f9f9"/>
<rect x="38.1" y="323.69" width="237.1" height="0.8" fill="#f9f9f9"/>
<rect x="38.1" y="320.6" width="237.1" height="0.8" fill="#f9f9f9"/>
<rect x="38.1" y="317.52" width="237.1" height="1" fill="#efefef"/>
<rect x="38.1" y="314.44" width="237.1" height="0.8" fill="#f9f9f9"/>
<rect x="38.1" y="311.35" width="237.1" height="0.8" fill="#f9f9f9"/>
<rect x="38.1" y="308.27" width="237.1" height="0.8" fill="#f9f9f9"/>
<rect x="38.1" y="305.18" width="237.1" height="0.8" fill="#f9f9f9"/>
<rect x="38.1" y="302.1" width="237.1" height="1" fill="#efefef"/>
<text x="33.9" y="382.2" font-size="7" fill="#515a63" font-weight="400" text-anchor="end" textLength="8.3" lengthAdjust="spacingAndGlyphs" stroke="#515a63" stroke-width="0.1">0%</text>
<text x="33.9" y="366.78" font-size="7" fill="#515a63" font-weight="400" text-anchor="end" textLength="11.2" lengthAdjust="spacingAndGlyphs" stroke="#515a63" stroke-width="0.1">20%</text>
<text x="33.9" y="351.36" font-size="7" fill="#515a63" font-weight="400" text-anchor="end" textLength="11.2" lengthAdjust="spacingAndGlyphs" stroke="#515a63" stroke-width="0.1">40%</text>
<text x="33.9" y="335.94" font-size="7" fill="#515a63" font-weight="400" text-anchor="end" textLength="11.2" lengthAdjust="spacingAndGlyphs" stroke="#515a63" stroke-width="0.1">60%</text>
<text x="33.9" y="320.52" font-size="7" fill="#515a63" font-weight="400" text-anchor="end" textLength="11.2" lengthAdjust="spacingAndGlyphs" stroke="#515a63" stroke-width="0.1">80%</text>
<text x="33.9" y="305.1" font-size="7" fill="#515a63" font-weight="400" text-anchor="end" textLength="14.4" lengthAdjust="spacingAndGlyphs" stroke="#515a63" stroke-width="0.1">100%</text>
<rect x="61.72" y="365.82" width="31.8" height="13.88" fill="#ea0d17"/>
<rect x="61.72" y="302.6" width="31.8" height="63.22" fill="#07a51b"/>
<text x="77.62" y="389.9" font-size="7" fill="#515a63" font-weight="400" text-anchor="middle" textLength="29.3" lengthAdjust="spacingAndGlyphs" stroke="#515a63" stroke-width="0.1">2017-2018</text>
<rect x="140.75" y="371.22" width="31.8" height="8.48" fill="#ea0d17"/>
<rect x="140.75" y="360.43" width="31.8" height="10.79" fill="#fbb51b"/>
<rect x="140.75" y="341.54" width="31.8" height="18.89" fill="#07a51b"/>
<rect x="140.75" y="302.6" width="31.8" height="38.94" fill="#0a8ce0"/>
<text x="156.65" y="389.9" font-size="7" fill="#515a63" font-weight="400" text-anchor="middle" textLength="29.3" lengthAdjust="spacingAndGlyphs" stroke="#515a63" stroke-width="0.1">2018-2019</text>
<rect x="219.78" y="374.69" width="31.8" height="5.01" fill="#fbb51b"/>
<rect x="219.78" y="354.8" width="31.8" height="19.89" fill="#07a51b"/>
<rect x="219.78" y="302.6" width="31.8" height="52.2" fill="#0a8ce0"/>
<text x="235.68" y="389.9" font-size="7" fill="#515a63" font-weight="400" text-anchor="middle" textLength="29.3" lengthAdjust="spacingAndGlyphs" stroke="#515a63" stroke-width="0.1">2019-2020</text>
<rect x="37.6" y="379.7" width="1" height="2" fill="#e6e6e6"/>
<rect x="116.63" y="379.7" width="1" height="2" fill="#e6e6e6"/>
<rect x="195.67" y="379.7" width="1" height="2" fill="#e6e6e6"/>
<rect x="274.7" y="379.7" width="1" height="2" fill="#e6e6e6"/>
<rect x="65.2" y="400.2" width="7.3" height="1.7" rx="0.8" fill="#ea0d17"/>
<text x="76" y="404.0" font-size="8.5" fill="#3e4b59" font-weight="400" text-anchor="start" textLength="69.5" lengthAdjust="spacingAndGlyphs" stroke="#3e4b59" stroke-width="0.1">Achievement Level 1</text>
<rect x="149.7" y="400.2" width="7.3" height="1.7" rx="0.8" fill="#fbb51b"/>
<text x="160.1" y="404.0" font-size="8.5" fill="#3e4b59" font-weight="400" text-anchor="start" textLength="69.8" lengthAdjust="spacingAndGlyphs" stroke="#3e4b59" stroke-width="0.1">Achievement Level 2</text>
<rect x="65.2" y="409.4" width="7.3" height="1.7" rx="0.8" fill="#07a51b"/>
<text x="76" y="413.2" font-size="8.5" fill="#3e4b59" font-weight="400" text-anchor="start" textLength="69.5" lengthAdjust="spacingAndGlyphs" stroke="#3e4b59" stroke-width="0.1">Achievement Level 3</text>
<rect x="149.7" y="409.4" width="7.3" height="1.7" rx="0.8" fill="#0a8ce0"/>
<text x="160.1" y="413.2" font-size="8.5" fill="#3e4b59" font-weight="400" text-anchor="start" textLength="69.8" lengthAdjust="spacingAndGlyphs" stroke="#3e4b59" stroke-width="0.1">Achievement Level 4</text>
<rect x="328.1" y="379.2" width="237.1" height="1" fill="#efefef"/>
<rect x="328.1" y="376.12" width="237.1" height="0.8" fill="#f9f9f9"/>
<rect x="328.1" y="373.03" width="237.1" height="0.8" fill="#f9f9f9"/>
<rect x="328.1" y="369.95" width="237.1" height="0.8" fill="#f9f9f9"/>
<rect x="328.1" y="366.86" width="237.1" height="0.8" fill="#f9f9f9"/>
<rect x="328.1" y="363.78" width="237.1" height="1" fill="#efefef"/>
<rect x="328.1" y="360.7" width="237.1" height="0.8" fill="#f9f9f9"/>
<rect x="328.1" y="357.61" width="237.1" height="0.8" fill="#f9f9f9"/>
<rect x="328.1" y="354.53" width="237.1" height="0.8" fill="#f9f9f9"/>
<rect x="328.1" y="351.44" width="237.1" height="0.8" fill="#f9f9f9"/>
<rect x="328.1" y="348.36" width="237.1" height="1" fill="#efefef"/>
<rect x="328.1" y="345.28" width="237.1" height="0.8" fill="#f9f9f9"/>
<rect x="328.1" y="342.19" width="237.1" height="0.8" fill="#f9f9f9"/>
<rect x="328.1" y="339.11" width="237.1" height="0.8" fill="#f9f9f9"/>
<rect x="328.1" y="336.02" width="237.1" height="0.8" fill="#f9f9f9"/>
<rect x="328.1" y="332.94" width="237.1" height="1" fill="#efefef"/>
<rect x="328.1" y="329.86" width="237.1" height="0.8" fill="#f9f9f9"/>
<rect x="328.1" y="326.77" width="237.1" height="0.8" fill="#f9f9f9"/>
<rect x="328.1" y="323.69" width="237.1" height="0.8" fill="#f9f9f9"/>
<rect x="328.1" y="320.6" width="237.1" height="0.8" fill="#f9f9f9"/>
<rect x="328.1" y="317.52" width="237.1" height="1" fill="#efefef"/>
<rect x="328.1" y="314.44" width="237.1" height="0.8" fill="#f9f9f9"/>
<rect x="328.1" y="311.35" width="237.1" height="0.8" fill="#f9f9f9"/>
<rect x="328.1" y="308.27" width="237.1" height="0.8" fill="#f9f9f9"/>
<rect x="328.1" y="305.18" width="237.1" height="0.8" fill="#f9f9f9"/>
<rect x="328.1" y="302.1" width="237.1" height="1" fill="#efefef"/>
<text x="323.9" y="382.2" font-size="7" fill="#515a63" font-weight="400" text-anchor="end" textLength="8.3" lengthAdjust="spacingAndGlyphs" stroke="#515a63" stroke-width="0.1">0%</text>
<text x="323.9" y="366.78" font-size="7" fill="#515a63" font-weight="400" text-anchor="end" textLength="11.2" lengthAdjust="spacingAndGlyphs" stroke="#515a63" stroke-width="0.1">20%</text>
<text x="323.9" y="351.36" font-size="7" fill="#515a63" font-weight="400" text-anchor="end" textLength="11.2" lengthAdjust="spacingAndGlyphs" stroke="#515a63" stroke-width="0.1">40%</text>
<text x="323.9" y="335.94" font-size="7" fill="#515a63" font-weight="400" text-anchor="end" textLength="11.2" lengthAdjust="spacingAndGlyphs" stroke="#515a63" stroke-width="0.1">60%</text>
<text x="323.9" y="320.52" font-size="7" fill="#515a63" font-weight="400" text-anchor="end" textLength="11.2" lengthAdjust="spacingAndGlyphs" stroke="#515a63" stroke-width="0.1">80%</text>
<text x="323.9" y="305.1" font-size="7" fill="#515a63" font-weight="400" text-anchor="end" textLength="14.4" lengthAdjust="spacingAndGlyphs" stroke="#515a63" stroke-width="0.1">100%</text>
<rect x="351.72" y="365.59" width="31.8" height="14.11" fill="#ea0d17"/>
<rect x="351.72" y="353.1" width="31.8" height="12.49" fill="#fbb51b"/>
<rect x="351.72" y="330.97" width="31.8" height="22.13" fill="#07a51b"/>
<rect x="351.72" y="302.6" width="31.8" height="28.37" fill="#0a8ce0"/>
<text x="367.62" y="389.9" font-size="7" fill="#515a63" font-weight="400" text-anchor="middle" textLength="29.3" lengthAdjust="spacingAndGlyphs" stroke="#515a63" stroke-width="0.1">2017-2018</text>
<rect x="430.75" y="369.14" width="31.8" height="10.56" fill="#ea0d17"/>
<rect x="430.75" y="352.33" width="31.8" height="16.81" fill="#fbb51b"/>
<rect x="430.75" y="323.96" width="31.8" height="28.37" fill="#07a51b"/>
<rect x="430.75" y="302.6" width="31.8" height="21.36" fill="#0a8ce0"/>
<text x="446.65" y="389.9" font-size="7" fill="#515a63" font-weight="400" text-anchor="middle" textLength="29.3" lengthAdjust="spacingAndGlyphs" stroke="#515a63" stroke-width="0.1">2018-2019</text>
<rect x="509.78" y="376.92" width="31.8" height="2.78" fill="#ea0d17"/>
<rect x="509.78" y="374.92" width="31.8" height="2.0" fill="#fbb51b"/>
<rect x="509.78" y="360.43" width="31.8" height="14.49" fill="#07a51b"/>
<rect x="509.78" y="302.6" width="31.8" height="57.82" fill="#0a8ce0"/>
<text x="525.68" y="389.9" font-size="7" fill="#515a63" font-weight="400" text-anchor="middle" textLength="29.3" lengthAdjust="spacingAndGlyphs" stroke="#515a63" stroke-width="0.1">2019-2020</text>
<rect x="327.6" y="379.7" width="1" height="2" fill="#e6e6e6"/>
<rect x="406.63" y="379.7" width="1" height="2" fill="#e6e6e6"/>
<rect x="485.67" y="379.7" width="1" height="2" fill="#e6e6e6"/>
<rect x="564.7" y="379.7" width="1" height="2" fill="#e6e6e6"/>
<rect x="355.2" y="400.2" width="7.3" height="1.7" rx="0.8" fill="#ea0d17"/>
<text x="366" y="404.0" font-size="8.5" fill="#3e4b59" font-weight="400" text-anchor="start" textLength="69.5" lengthAdjust="spacingAndGlyphs" stroke="#3e4b59" stroke-width="0.1">Achievement Level 1</text>
<rect x="439.7" y="400.2" width="7.3" height="1.7" rx="0.8" fill="#fbb51b"/>
<text x="450.1" y="404.0" font-size="8.5" fill="#3e4b59" font-weight="400" text-anchor="start" textLength="69.8" lengthAdjust="spacingAndGlyphs" stroke="#3e4b59" stroke-width="0.1">Achievement Level 2</text>
<rect x="355.2" y="409.4" width="7.3" height="1.7" rx="0.8" fill="#07a51b"/>
<text x="366" y="413.2" font-size="8.5" fill="#3e4b59" font-weight="400" text-anchor="start" textLength="69.5" lengthAdjust="spacingAndGlyphs" stroke="#3e4b59" stroke-width="0.1">Achievement Level 3</text>
<rect x="439.7" y="409.4" width="7.3" height="1.7" rx="0.8" fill="#0a8ce0"/>
<text x="450.1" y="413.2" font-size="8.5" fill="#3e4b59" font-weight="400" text-anchor="start" textLength="69.8" lengthAdjust="spacingAndGlyphs" stroke="#3e4b59" stroke-width="0.1">Achievement Level 4</text>
<rect x="617.4" y="379.2" width="237.1" height="1" fill="#efefef"/>
<rect x="617.4" y="376.12" width="237.1" height="0.8" fill="#f9f9f9"/>
<rect x="617.4" y="373.03" width="237.1" height="0.8" fill="#f9f9f9"/>
<rect x="617.4" y="369.95" width="237.1" height="0.8" fill="#f9f9f9"/>
<rect x="617.4" y="366.86" width="237.1" height="0.8" fill="#f9f9f9"/>
<rect x="617.4" y="363.78" width="237.1" height="1" fill="#efefef"/>
<rect x="617.4" y="360.7" width="237.1" height="0.8" fill="#f9f9f9"/>
<rect x="617.4" y="357.61" width="237.1" height="0.8" fill="#f9f9f9"/>
<rect x="617.4" y="354.53" width="237.1" height="0.8" fill="#f9f9f9"/>
<rect x="617.4" y="351.44" width="237.1" height="0.8" fill="#f9f9f9"/>
<rect x="617.4" y="348.36" width="237.1" height="1" fill="#efefef"/>
<rect x="617.4" y="345.28" width="237.1" height="0.8" fill="#f9f9f9"/>
<rect x="617.4" y="342.19" width="237.1" height="0.8" fill="#f9f9f9"/>
<rect x="617.4" y="339.11" width="237.1" height="0.8" fill="#f9f9f9"/>
<rect x="617.4" y="336.02" width="237.1" height="0.8" fill="#f9f9f9"/>
<rect x="617.4" y="332.94" width="237.1" height="1" fill="#efefef"/>
<rect x="617.4" y="329.86" width="237.1" height="0.8" fill="#f9f9f9"/>
<rect x="617.4" y="326.77" width="237.1" height="0.8" fill="#f9f9f9"/>
<rect x="617.4" y="323.69" width="237.1" height="0.8" fill="#f9f9f9"/>
<rect x="617.4" y="320.6" width="237.1" height="0.8" fill="#f9f9f9"/>
<rect x="617.4" y="317.52" width="237.1" height="1" fill="#efefef"/>
<rect x="617.4" y="314.44" width="237.1" height="0.8" fill="#f9f9f9"/>
<rect x="617.4" y="311.35" width="237.1" height="0.8" fill="#f9f9f9"/>
<rect x="617.4" y="308.27" width="237.1" height="0.8" fill="#f9f9f9"/>
<rect x="617.4" y="305.18" width="237.1" height="0.8" fill="#f9f9f9"/>
<rect x="617.4" y="302.1" width="237.1" height="1" fill="#efefef"/>
<text x="613.2" y="382.2" font-size="7" fill="#515a63" font-weight="400" text-anchor="end" textLength="8.3" lengthAdjust="spacingAndGlyphs" stroke="#515a63" stroke-width="0.1">0%</text>
<text x="613.2" y="366.78" font-size="7" fill="#515a63" font-weight="400" text-anchor="end" textLength="11.2" lengthAdjust="spacingAndGlyphs" stroke="#515a63" stroke-width="0.1">20%</text>
<text x="613.2" y="351.36" font-size="7" fill="#515a63" font-weight="400" text-anchor="end" textLength="11.2" lengthAdjust="spacingAndGlyphs" stroke="#515a63" stroke-width="0.1">40%</text>
<text x="613.2" y="335.94" font-size="7" fill="#515a63" font-weight="400" text-anchor="end" textLength="11.2" lengthAdjust="spacingAndGlyphs" stroke="#515a63" stroke-width="0.1">60%</text>
<text x="613.2" y="320.52" font-size="7" fill="#515a63" font-weight="400" text-anchor="end" textLength="11.2" lengthAdjust="spacingAndGlyphs" stroke="#515a63" stroke-width="0.1">80%</text>
<text x="613.2" y="305.1" font-size="7" fill="#515a63" font-weight="400" text-anchor="end" textLength="14.4" lengthAdjust="spacingAndGlyphs" stroke="#515a63" stroke-width="0.1">100%</text>
<rect x="641.02" y="365.59" width="31.8" height="14.11" fill="#ea0d17"/>
<rect x="641.02" y="337.99" width="31.8" height="27.6" fill="#fbb51b"/>
<rect x="641.02" y="321.88" width="31.8" height="16.11" fill="#07a51b"/>
<rect x="641.02" y="302.6" width="31.8" height="19.27" fill="#0a8ce0"/>
<text x="656.92" y="389.9" font-size="7" fill="#515a63" font-weight="400" text-anchor="middle" textLength="29.3" lengthAdjust="spacingAndGlyphs" stroke="#515a63" stroke-width="0.1">2017-2018</text>
<rect x="720.05" y="373.38" width="31.8" height="6.32" fill="#ea0d17"/>
<rect x="720.05" y="352.1" width="31.8" height="21.28" fill="#07a51b"/>
<rect x="720.05" y="302.6" width="31.8" height="49.5" fill="#0a8ce0"/>
<text x="735.95" y="389.9" font-size="7" fill="#515a63" font-weight="400" text-anchor="middle" textLength="29.3" lengthAdjust="spacingAndGlyphs" stroke="#515a63" stroke-width="0.1">2018-2019</text>
<rect x="799.08" y="377.23" width="31.8" height="2.47" fill="#ea0d17"/>
<rect x="799.08" y="371.91" width="31.8" height="5.32" fill="#fbb51b"/>
<rect x="799.08" y="363.43" width="31.8" height="8.48" fill="#07a51b"/>
<rect x="799.08" y="302.6" width="31.8" height="60.83" fill="#0a8ce0"/>
<text x="814.98" y="389.9" font-size="7" fill="#515a63" font-weight="400" text-anchor="middle" textLength="29.3" lengthAdjust="spacingAndGlyphs" stroke="#515a63" stroke-width="0.1">2019-2020</text>
<rect x="616.9" y="379.7" width="1" height="2" fill="#e6e6e6"/>
<rect x="695.93" y="379.7" width="1" height="2" fill="#e6e6e6"/>
<rect x="774.97" y="379.7" width="1" height="2" fill="#e6e6e6"/>
<rect x="854.0" y="379.7" width="1" height="2" fill="#e6e6e6"/>
<rect x="644.5" y="400.2" width="7.3" height="1.7" rx="0.8" fill="#ea0d17"/>
<text x="655.3" y="404.0" font-size="8.5" fill="#3e4b59" font-weight="400" text-anchor="start" textLength="69.5" lengthAdjust="spacingAndGlyphs" stroke="#3e4b59" stroke-width="0.1">Achievement Level 1</text>
<rect x="729.0" y="400.2" width="7.3" height="1.7" rx="0.8" fill="#fbb51b"/>
<text x="739.4" y="404.0" font-size="8.5" fill="#3e4b59" font-weight="400" text-anchor="start" textLength="69.8" lengthAdjust="spacingAndGlyphs" stroke="#3e4b59" stroke-width="0.1">Achievement Level 2</text>
<rect x="644.5" y="409.4" width="7.3" height="1.7" rx="0.8" fill="#07a51b"/>
<text x="655.3" y="413.2" font-size="8.5" fill="#3e4b59" font-weight="400" text-anchor="start" textLength="69.5" lengthAdjust="spacingAndGlyphs" stroke="#3e4b59" stroke-width="0.1">Achievement Level 3</text>
<rect x="729.0" y="409.4" width="7.3" height="1.7" rx="0.8" fill="#0a8ce0"/>
<text x="739.4" y="413.2" font-size="8.5" fill="#3e4b59" font-weight="400" text-anchor="start" textLength="69.8" lengthAdjust="spacingAndGlyphs" stroke="#3e4b59" stroke-width="0.1">Achievement Level 4</text>
</svg>
</body></html>
